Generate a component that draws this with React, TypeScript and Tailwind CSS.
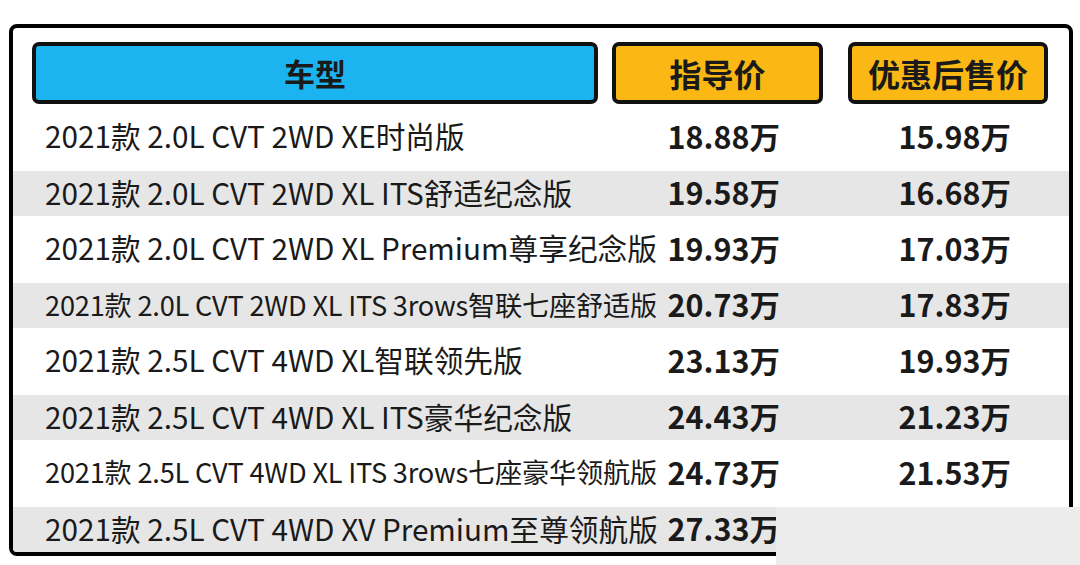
const rows = [
  { name: "2021款 2.0L CVT 2WD XE时尚版", guide: "18.88万", deal: "15.98万" },
  { name: "2021款 2.0L CVT 2WD XL ITS舒适纪念版", guide: "19.58万", deal: "16.68万" },
  { name: "2021款 2.0L CVT 2WD XL Premium尊享纪念版", guide: "19.93万", deal: "17.03万" },
  { name: "2021款 2.0L CVT 2WD XL ITS 3rows智联七座舒适版", guide: "20.73万", deal: "17.83万", small: true },
  { name: "2021款 2.5L CVT 4WD XL智联领先版", guide: "23.13万", deal: "19.93万" },
  { name: "2021款 2.5L CVT 4WD XL ITS豪华纪念版", guide: "24.43万", deal: "21.23万" },
  { name: "2021款 2.5L CVT 4WD XL ITS 3rows七座豪华领航版", guide: "24.73万", deal: "21.53万", small: true },
  { name: "2021款 2.5L CVT 4WD XV Premium至尊领航版", guide: "27.33万", deal: "" },
];

const font = { fontFamily: '"Noto Sans CJK SC", "Noto Sans", sans-serif' };

export default function App() {
  return (
    <div className="relative w-[1080px] h-[565px] bg-white overflow-hidden text-[#1a1a1a]" style={font}>
      <div className="pt-[24px] pl-[9px]">
        <div className="w-[1064px] h-[532px] border-[4px] border-black rounded-[8px] flex flex-col overflow-hidden">
          <div className="flex pl-[19px] pt-[14px] h-[76px] shrink-0">
            <div className="w-[566px] h-[62px] bg-[#1cb4f0] border-[4px] border-[#111] rounded-[7px] flex items-center justify-center text-[31px] font-bold">
              车型
            </div>
            <div className="ml-[14px] w-[211px] h-[62px] bg-[#fbb814] border-[4px] border-[#111] rounded-[7px] flex items-center justify-center text-[32px] font-bold">
              指导价
            </div>
            <div className="ml-[25px] w-[200px] h-[62px] bg-[#fbb814] border-[4px] border-[#111] rounded-[7px] flex items-center justify-center text-[32px] font-bold">
              优惠后售价
            </div>
          </div>
          {rows.map((r, i) => (
            <div
              key={i}
              className={
                i % 2 === 1
                  ? "flex items-center h-[45px] bg-[#e6e6e6] shrink-0 pb-[2px]"
                  : "flex items-center h-[67px] shrink-0 pb-[3px]"
              }
            >
              <div className="w-[640px] pl-[32px] whitespace-nowrap leading-none">
                <span className={r.small ? "text-[27.2px] tracking-[-0.2px]" : "text-[29.7px]"}>{r.name}</span>
              </div>
              <div className="w-[127px] text-right text-[30.5px] font-bold whitespace-nowrap leading-none">{r.guide}</div>
              <div className="w-[231px] text-right text-[30.5px] font-bold whitespace-nowrap leading-none">{r.deal}</div>
            </div>
          ))}
        </div>
      </div>
      <div className="absolute left-[776px] top-[507px] w-[304px] h-[58px] bg-[#ececec]" />
    </div>
  );
}
